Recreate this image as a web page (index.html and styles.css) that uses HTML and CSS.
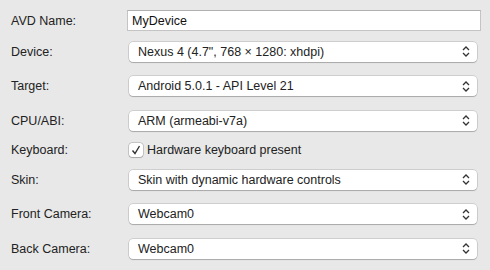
FILE: index.html
```html
<!DOCTYPE html>
<html lang="en">
<head>
  <meta charset="UTF-8">
  <title>Virtual Device Configuration</title>
  <link rel="stylesheet" href="styles.css">
</head>
<body>
  <main class="form">
    <div class="row row-field">
      <label class="label">AVD Name:</label>
      <div class="textfield">MyDevice</div>
    </div>

    <div class="row">
      <label class="label">Device:</label>
      <div class="popup">
        <span class="popup-text">Nexus 4 (4.7", 768 × 1280: xhdpi)</span>
        <svg class="chevron" width="8" height="11" viewBox="0 0 8 11"><path d="M1 4 L4 1 L7 4 M1 7 L4 10 L7 7" fill="none" stroke="#333" stroke-width="1.3"/></svg>
      </div>
    </div>

    <div class="row">
      <label class="label">Target:</label>
      <div class="popup">
        <span class="popup-text">Android 5.0.1 - API Level 21</span>
        <svg class="chevron" width="8" height="11" viewBox="0 0 8 11"><path d="M1 4 L4 1 L7 4 M1 7 L4 10 L7 7" fill="none" stroke="#333" stroke-width="1.3"/></svg>
      </div>
    </div>

    <div class="row">
      <label class="label">CPU/ABI:</label>
      <div class="popup">
        <span class="popup-text">ARM (armeabi-v7a)</span>
        <svg class="chevron" width="8" height="11" viewBox="0 0 8 11"><path d="M1 4 L4 1 L7 4 M1 7 L4 10 L7 7" fill="none" stroke="#333" stroke-width="1.3"/></svg>
      </div>
    </div>

    <div class="row row-check">
      <label class="label">Keyboard:</label>
      <div class="check">
        <span class="checkbox">
          <svg width="10" height="10" viewBox="0 0 10 10"><path d="M1.5 5.5 L4 8.5 L8.5 1" fill="none" stroke="#333" stroke-width="1.4"/></svg>
        </span>
        <span>Hardware keyboard present</span>
      </div>
    </div>

    <div class="row">
      <label class="label">Skin:</label>
      <div class="popup">
        <span class="popup-text">Skin with dynamic hardware controls</span>
        <svg class="chevron" width="8" height="11" viewBox="0 0 8 11"><path d="M1 4 L4 1 L7 4 M1 7 L4 10 L7 7" fill="none" stroke="#333" stroke-width="1.3"/></svg>
      </div>
    </div>

    <div class="row">
      <label class="label">Front Camera:</label>
      <div class="popup">
        <span class="popup-text">Webcam0</span>
        <svg class="chevron" width="8" height="11" viewBox="0 0 8 11"><path d="M1 4 L4 1 L7 4 M1 7 L4 10 L7 7" fill="none" stroke="#333" stroke-width="1.3"/></svg>
      </div>
    </div>

    <div class="row">
      <label class="label">Back Camera:</label>
      <div class="popup">
        <span class="popup-text">Webcam0</span>
        <svg class="chevron" width="8" height="11" viewBox="0 0 8 11"><path d="M1 4 L4 1 L7 4 M1 7 L4 10 L7 7" fill="none" stroke="#333" stroke-width="1.3"/></svg>
      </div>
    </div>
  </main>
</body>
</html>
```

FILE: styles.css
```css
body {
  margin: 0;
  padding: 0;
  background-color: #e8e8e8;
  color: #222;
  font-family: "Liberation Sans", Arial, sans-serif;
  font-size: 12.5px;
}

.form {
  padding: 10px 9px 0 11px;
  display: flex;
  flex-direction: column;
  gap: 6.5px;
}

.row {
  display: flex;
  align-items: center;
  height: 28px;
}

.row-field {
  height: 21px;
}

.row-check {
  height: 18px;
}

.label {
  width: 116px;
  flex-shrink: 0;
}

.textfield {
  flex: 1;
  height: 21px;
  box-sizing: border-box;
  padding: 0 4px;
  display: flex;
  align-items: center;
  background-color: #fff;
  border: 1px solid #c4c4c4;
  border-top-color: #b0b0b0;
  color: #111;
}

.popup {
  flex: 1;
  height: 20px;
  box-sizing: border-box;
  margin: 0 4px 0 2px;
  padding: 0 7px 0 9px;
  display: flex;
  align-items: center;
  justify-content: space-between;
  background-color: #fff;
  border-radius: 4px;
  box-shadow: 0 0 0 0.5px rgba(0,0,0,0.22), 0 1px 1px rgba(0,0,0,0.18);
}

.popup-text {
  white-space: nowrap;
}

.chevron {
  flex-shrink: 0;
}

.check {
  display: flex;
  align-items: center;
  margin-left: 2px;
  gap: 4px;
}

.checkbox {
  width: 14px;
  height: 14px;
  box-sizing: border-box;
  display: flex;
  align-items: center;
  justify-content: center;
  background-color: #fff;
  border-radius: 3px;
  box-shadow: 0 0 0 0.5px rgba(0,0,0,0.3), 0 1px 1px rgba(0,0,0,0.15);
}
```
